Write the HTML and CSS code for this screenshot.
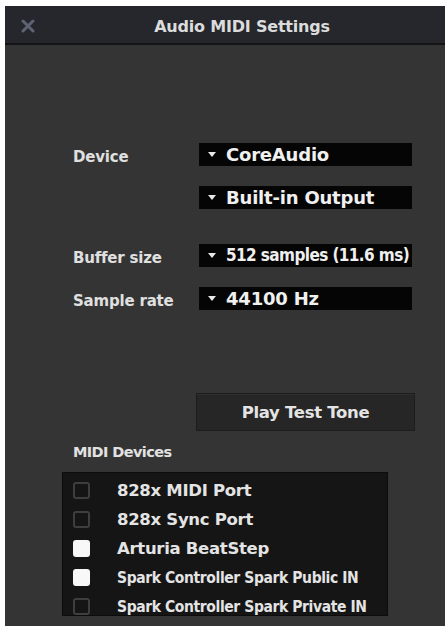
FILE: index.html
```html
<!DOCTYPE html>
<html>
<head>
<meta charset="utf-8">
<link rel="stylesheet" href="styles.css">
</head>
<body>
<div class="window">
  <div class="titlebar">
    <svg class="close" width="14" height="14" viewBox="0 0 14 14"><path d="M2 2 L12 12 M12 2 L2 12" stroke="#5d6374" stroke-width="3" stroke-linecap="round"/></svg>
    <span class="title">Audio MIDI Settings</span>
  </div>
  <div class="content">
    <div class="settings">
      <div class="label">Device</div>
      <div class="select"><span class="arrow"></span>CoreAudio</div>
      <div class="label"></div>
      <div class="select"><span class="arrow"></span>Built-in Output</div>
      <div class="label gap">Buffer size</div>
      <div class="select gap narrow"><span class="arrow"></span>512 samples (11.6 ms)</div>
      <div class="label">Sample rate</div>
      <div class="select"><span class="arrow"></span>44100 Hz</div>
    </div>
    <div class="btnrow"><div class="button">Play Test Tone</div></div>
    <div class="midilabel">MIDI Devices</div>
    <div class="midilist">
      <div class="row"><span class="box"></span><span class="name">828x MIDI Port</span></div>
      <div class="row"><span class="box"></span><span class="name">828x Sync Port</span></div>
      <div class="row"><span class="box on"></span><span class="name">Arturia BeatStep</span></div>
      <div class="row"><span class="box on"></span><span class="name small">Spark Controller Spark Public IN</span></div>
      <div class="row"><span class="box"></span><span class="name small">Spark Controller Spark Private IN</span></div>
    </div>
  </div>
</div>
</body>
</html>
```
FILE: styles.css
```css
html, body {
  margin: 0;
  padding: 0;
  background: #ffffff;
}
body {
  width: 445px;
  height: 626px;
  overflow: hidden;
  font-family: "DejaVu Sans", "Open Sans", sans-serif;
}
.window {
  margin: 6px 0 0 5px;
  height: 620px;
  background: #343434;
  display: flex;
  flex-direction: column;
}
.titlebar {
  height: 37px;
  background: #25272c;
  border-bottom: 2px solid #141414;
  display: flex;
  align-items: center;
  justify-content: center;
  position: relative;
}
.close {
  position: absolute;
  left: 16px;
  top: 13px;
}
.title {
  color: #dcdcdc;
  font-weight: 700;
  font-size: 16px;
  letter-spacing: -0.2px;
  margin-left: 34px;
  margin-top: 3px;
}
.content {
  padding: 98px 0 0 68px;
  display: flex;
  flex-direction: column;
}
.settings {
  display: grid;
  grid-template-columns: 126px 213px;
  row-gap: 20px;
}
.label {
  color: #e0e0e0;
  font-weight: 700;
  font-size: 15px;
  height: 23px;
  line-height: 23px;
  padding-top: 3px;
  box-sizing: border-box;
  letter-spacing: -0.2px;
}
.gap {
  margin-top: 15px;
}
.select {
  height: 23px;
  line-height: 23px;
  background: #050505;
  color: #f0f0f0;
  font-weight: 700;
  font-size: 18px;
  display: flex;
  align-items: center;
  letter-spacing: -0.2px;
  white-space: nowrap;
}
.select.narrow {
  font-family: "DejaVu Sans Condensed", "DejaVu Sans", sans-serif;
  font-stretch: condensed;
  font-size: 17px;
  letter-spacing: -0.6px;
}
.arrow {
  width: 0;
  height: 0;
  border-left: 4px solid transparent;
  border-right: 4px solid transparent;
  border-top: 5px solid #e8e8e8;
  margin: 0 10px 0 9px;
}
.btnrow {
  margin-top: 83px;
  padding-left: 123px;
}
.button {
  width: 217px;
  height: 36px;
  background: #262626;
  border: 1px solid #1c1c1c;
  box-shadow: inset 0 1px 0 #303030;
  color: #e4e4e4;
  font-weight: 700;
  font-size: 16.5px;
  display: flex;
  align-items: center;
  justify-content: center;
  letter-spacing: -0.3px;
}
.midilabel {
  margin-top: 11px;
  color: #e2e2e2;
  font-weight: 700;
  font-size: 14.5px;
  letter-spacing: -0.6px;
  height: 20px;
  line-height: 20px;
}
.midilist {
  margin: 10px 0 0 -11px;
  width: 326px;
  height: 144px;
  background: #151515;
  border: 1px solid #0c0c0c;
  padding-top: 3px;
  box-sizing: border-box;
}
.row {
  height: 29px;
  display: flex;
  align-items: center;
}
.box {
  width: 17px;
  height: 17px;
  box-sizing: border-box;
  border: 2px solid #3e3e3e;
  border-radius: 3px;
  margin: 0 27px 0 10px;
}
.box.on {
  background: #f8f8f8;
  border-color: #f8f8f8;
}
.name {
  color: #e4e4e4;
  font-weight: 700;
  font-size: 16.5px;
  letter-spacing: -0.3px;
  white-space: nowrap;
}
.name.small {
  font-family: "DejaVu Sans Condensed", "DejaVu Sans", sans-serif;
  font-stretch: condensed;
  font-size: 15.5px;
  letter-spacing: -0.4px;
}
```
